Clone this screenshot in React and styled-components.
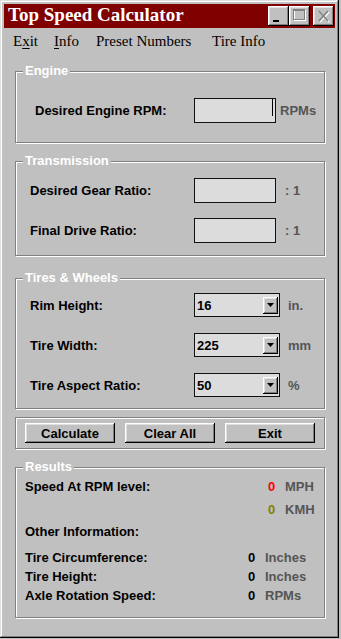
import React from 'react';
import styled, { createGlobalStyle } from 'styled-components';

const Global = createGlobalStyle`
  html, body { margin: 0; padding: 0; background: #c0c0c0; }
  body { font-family: "Liberation Sans", Arial, sans-serif; }
`;

const sans = `"Liberation Sans", Arial, sans-serif`;
const serif = `"Liberation Serif", "Times New Roman", serif`;

const Window = styled.div`
  box-sizing: border-box;
  width: 339px;
  height: 638px;
  padding: 4px;
  background: #c0c0c0;
  box-shadow: inset -1px -1px 0 #000, inset 1px 1px 0 #dfdfdf,
    inset -2px -2px 0 #808080, inset 2px 2px 0 #fff;
  display: flex;
  flex-direction: column;
`;

const TitleBar = styled.div`
  height: 24px;
  background: #800000;
  display: flex;
  align-items: center;
  padding: 0 1px 0 4px;
`;

const Title = styled.div`
  flex: 1;
  color: #fff;
  font: bold 19px ${serif};
  line-height: 22px;
  padding-bottom: 2px;
  white-space: nowrap;
`;

const TitleButton = styled.div`
  width: 21px;
  height: 20px;
  margin-left: ${(p) => p.$ml || 0}px;
  background: #c0c0c0;
  box-shadow: inset -1px -1px 0 #000, inset 1px 1px 0 #fff,
    inset -2px -2px 0 #808080, inset 2px 2px 0 #dfdfdf;
  display: flex;
  svg { display: block; }
`;

const MenuBar = styled.div`
  height: 26px;
  display: flex;
  align-items: center;
  padding-left: 9px;
  font: 15px ${serif};
  color: #000;
`;

const MenuItem = styled.span`
  width: ${(p) => (p.$w ? `${p.$w}px` : 'auto')};
  flex: none;
  white-space: nowrap;
  u { text-decoration: underline; text-underline-offset: 2px; }
`;

const Group = styled.fieldset`
  box-sizing: border-box;
  width: 310px;
  margin: ${(p) => p.$mt}px 0 0 11px;
  padding: 0;
  min-width: 0;
  border: 1px solid #808080;
  box-shadow: inset 1px 1px 0 #fff, 1px 1px 0 #fff;
`;

const Legend = styled.legend`
  margin-left: 7px;
  padding: 0 2px;
  font: bold 13px/14px ${sans};
  color: #fff;
  background: #c0c0c0;
`;

const Body = styled.div`
  padding: ${(p) => p.$pad};
  display: flex;
  flex-direction: column;
  gap: ${(p) => p.$gap || 0}px;
`;

const FieldRow = styled.div`
  display: flex;
  align-items: center;
  height: ${(p) => p.$h}px;
`;

const Label = styled.div`
  width: ${(p) => p.$w}px;
  flex: none;
  font: bold 13px ${sans};
  color: #000;
  white-space: nowrap;
`;

const TextBox = styled.div`
  box-sizing: border-box;
  width: 82px;
  height: 25px;
  border: 1px solid #111;
  background: #dcdcdc;
  display: flex;
  justify-content: flex-end;
  align-items: flex-start;
`;

const Caret = styled.span`
  width: 1px;
  height: 17px;
  margin-right: 2px;
  background: #000;
`;

const Unit = styled.div`
  margin-left: ${(p) => p.$ml}px;
  font: bold 13px ${sans};
  color: #555;
  white-space: nowrap;
`;

const Select = styled.div`
  box-sizing: border-box;
  width: 86px;
  height: 24px;
  border: 1px solid #111;
  background: #dcdcdc;
  display: flex;
  align-items: center;
  padding: 0 1px 0 2px;
`;

const SelectValue = styled.div`
  flex: 1;
  font: bold 13px ${sans};
  color: #000;
`;

const DropButton = styled.div`
  width: 15px;
  height: 17px;
  background: #c0c0c0;
  box-shadow: inset -1px -1px 0 #000, inset 1px 1px 0 #fff,
    inset -2px -2px 0 #808080, inset 2px 2px 0 #dfdfdf;
  display: flex;
  align-items: center;
  justify-content: center;
  svg { display: block; }
`;

const ButtonPanel = styled.div`
  box-sizing: border-box;
  width: 310px;
  margin: 8px 0 0 11px;
  padding: 5px 0 5px 9px;
  border: 1px solid #808080;
  box-shadow: inset 1px 1px 0 #fff, 1px 1px 0 #fff;
  display: flex;
  gap: 10px;
`;

const Button = styled.button`
  box-sizing: border-box;
  width: 90px;
  height: 20px;
  padding: 0;
  border: none;
  background: #c0c0c0;
  box-shadow: inset -1px -1px 0 #000, inset 1px 1px 0 #fff,
    inset -2px -2px 0 #808080, inset 2px 2px 0 #dfdfdf;
  font: bold 13px ${sans};
  color: #000;
`;

const ResultRow = styled.div`
  display: grid;
  grid-template-columns: ${(p) => p.$lw}px 17px auto;
  align-items: center;
  height: ${(p) => p.$h}px;
  margin-top: ${(p) => p.$mt || 0}px;
  font: bold 13px ${sans};
  color: #000;
  white-space: nowrap;
`;

const Value = styled.span`
  color: ${(p) => p.$color || '#000'};
`;

const ResultUnit = styled.span`
  color: #555;
`;

const Arrow = () => (
  <svg width="7" height="4" viewBox="0 0 7 4">
    <path d="M0 0h7L3.5 4z" fill="#000" />
  </svg>
);

function EngineRow() {
  return (
    <FieldRow $h={25}>
      <Label $w={159}>Desired Engine RPM:</Label>
      <TextBox>
        <Caret />
      </TextBox>
      <Unit $ml={4}>RPMs</Unit>
    </FieldRow>
  );
}

function RatioRow({ label }) {
  return (
    <FieldRow $h={25}>
      <Label $w={164}>{label}</Label>
      <TextBox />
      <Unit $ml={9}>: 1</Unit>
    </FieldRow>
  );
}

function SelectRow({ label, value, unit }) {
  return (
    <FieldRow $h={24}>
      <Label $w={164}>{label}</Label>
      <Select>
        <SelectValue>{value}</SelectValue>
        <DropButton>
          <Arrow />
        </DropButton>
      </Select>
      <Unit $ml={8}>{unit}</Unit>
    </FieldRow>
  );
}

export default function App() {
  return (
    <>
      <Global />
      <Window>
        <TitleBar>
          <Title>Top Speed Calculator</Title>
          <TitleButton>
            <svg width="21" height="20" viewBox="0 0 21 20">
              <rect x="5" y="14" width="6" height="2" fill="#000" />
            </svg>
          </TitleButton>
          <TitleButton>
            <svg width="21" height="20" viewBox="0 0 21 20">
              <rect x="5.5" y="4.5" width="11" height="10" fill="none" stroke="#fff" />
              <rect x="4.5" y="3.5" width="11" height="10" fill="none" stroke="#808080" />
              <line x1="4.5" y1="4.5" x2="15.5" y2="4.5" stroke="#808080" />
            </svg>
          </TitleButton>
          <TitleButton $ml={3}>
            <svg width="21" height="20" viewBox="0 0 21 20">
              <path d="M6 5l9 10M15 5l-9 10" stroke="#fff" strokeWidth="1.6" transform="translate(1 1)" />
              <path d="M6 5l9 10M15 5l-9 10" stroke="#808080" strokeWidth="1.6" />
            </svg>
          </TitleButton>
        </TitleBar>

        <MenuBar>
          <MenuItem $w={41}>E<u>x</u>it</MenuItem>
          <MenuItem $w={42}><u>I</u>nfo</MenuItem>
          <MenuItem $w={116}>Preset Numbers</MenuItem>
          <MenuItem>Tire Info</MenuItem>
        </MenuBar>

        <Group $mt={10}>
          <Legend>Engine</Legend>
          <Body $pad="20px 0 19px 19px">
            <EngineRow />
          </Body>
        </Group>

        <Group $mt={11}>
          <Legend>Transmission</Legend>
          <Body $pad="10px 0 12px 14px" $gap={15}>
            <RatioRow label="Desired Gear Ratio:" />
            <RatioRow label="Final Drive Ratio:" />
          </Body>
        </Group>

        <Group $mt={15}>
          <Legend>Tires &amp; Wheels</Legend>
          <Body $pad="8px 0 11px 14px" $gap={16}>
            <SelectRow label="Rim Height:" value="16" unit="in." />
            <SelectRow label="Tire Width:" value="225" unit="mm" />
            <SelectRow label="Tire Aspect Ratio:" value="50" unit="%" />
          </Body>
        </Group>

        <ButtonPanel>
          <Button>Calculate</Button>
          <Button>Clear All</Button>
          <Button>Exit</Button>
        </ButtonPanel>

        <Group $mt={11}>
          <Legend>Results</Legend>
          <Body $pad="2px 0 12px 9px">
            <ResultRow $lw={243} $h={20}>
              <span>Speed At RPM level:</span>
              <Value $color="#ff0000">0</Value>
              <ResultUnit>MPH</ResultUnit>
            </ResultRow>
            <ResultRow $lw={243} $h={20} $mt={3}>
              <span />
              <Value $color="#808000">0</Value>
              <ResultUnit>KMH</ResultUnit>
            </ResultRow>
            <ResultRow $lw={223} $h={20} $mt={2}>
              <span>Other Information:</span>
              <span />
              <span />
            </ResultRow>
            <ResultRow $lw={223} $h={19} $mt={7}>
              <span>Tire Circumference:</span>
              <Value>0</Value>
              <ResultUnit>Inches</ResultUnit>
            </ResultRow>
            <ResultRow $lw={223} $h={19}>
              <span>Tire Height:</span>
              <Value>0</Value>
              <ResultUnit>Inches</ResultUnit>
            </ResultRow>
            <ResultRow $lw={223} $h={19}>
              <span>Axle Rotation Speed:</span>
              <Value>0</Value>
              <ResultUnit>RPMs</ResultUnit>
            </ResultRow>
          </Body>
        </Group>
      </Window>
    </>
  );
}
